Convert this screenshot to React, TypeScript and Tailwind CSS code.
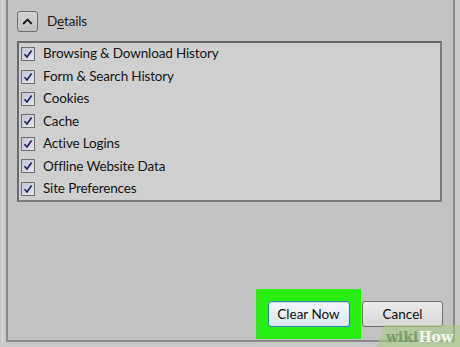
import { ChevronUp } from "lucide-react";

const ITEMS = [
  "Browsing & Download History",
  "Form & Search History",
  "Cookies",
  "Cache",
  "Active Logins",
  "Offline Website Data",
  "Site Preferences",
];

function CheckBox() {
  return (
    <div className="w-[14px] h-[14px] border border-[#6e6e6e] bg-gradient-to-br from-[#c4c4d4] to-[#e6e6ee] flex items-center justify-center shrink-0">
      <svg width="10" height="10" viewBox="0 0 10 10">
        <path d="M1.5 5.2 L4 8 L8.6 1.5" fill="none" stroke="#1d1d66" strokeWidth="1.6" />
      </svg>
    </div>
  );
}

export default function App() {
  return (
    <div
      className="w-[460px] h-[347px] bg-[#c9c9c9] relative overflow-hidden"
      style={{ fontFamily: "Lato, 'Open Sans', sans-serif" }}
    >
      <div className="absolute left-[2px] top-0 w-px h-[343px] bg-[#dedede]" />
      {/* dialog body */}
      <div className="ml-[6px] w-[449px] h-[342px] bg-[#c3c3c3] border-l-2 border-r-2 border-b-2 border-[#8a8a8a] flex flex-col pl-[9px] pr-[10px] pt-[11px] pb-[1px]">
        <div className="flex items-center h-[21px]">
          <div className="w-[21px] h-[21px] rounded-[3px] border border-[#6f6f6f] bg-gradient-to-b from-[#d4d4d4] to-[#c0c0c0] flex items-center justify-center">
            <ChevronUp className="w-[15px] h-[15px] text-[#111]" strokeWidth={3.2} />
          </div>
          <span className="ml-[9px] text-[13.5px] tracking-[-0.15px] text-[#1a1a1a]">
            D<span className="underline underline-offset-2">e</span>tails
          </span>
        </div>

        <div className="mt-[9px] w-[425px] h-[161px] bg-[#cfcfcf] border-2 border-t-[#6a6a6a] border-l-[#6a6a6a] border-b-[#7a7a7a] border-r-[#7a7a7a] flex flex-col">
          {ITEMS.map((item) => (
            <div key={item} className="h-[22.43px] flex items-center pl-[2px] gap-[8px]">
              <CheckBox />
              <span className="text-[13.5px] tracking-[-0.15px] text-[#151515] leading-none">{item}</span>
            </div>
          ))}
        </div>

        <div className="mt-auto flex items-center justify-end">
          <div className="w-[105px] h-[50px] bg-[#2aee12] flex items-center justify-center">
            <button className="w-[82px] h-[26px] rounded-[3px] border border-[#3c7fb1] bg-gradient-to-b from-[#f2f7fb] to-[#dbe6ef] text-[13.5px] text-[#111] shadow-[inset_0_0_0_1px_#c9e4f6]">
              Clear Now
            </button>
          </div>
          <button className="ml-px w-[81px] h-[26px] rounded-[3px] border border-[#707070] bg-gradient-to-b from-[#ececec] to-[#d6d6d6] text-[13.5px] text-[#111]">
            Cancel
          </button>
        </div>
      </div>

      {/* watermark */}
      <div
        className="absolute left-[380px] top-[325px] w-[90px] h-[24px] bg-[#a8cc8a]/60 pl-[6px] flex items-center"
        style={{ transform: "skewX(-20deg)" }}
      >
        <span
          className="text-[14px] font-bold leading-none whitespace-nowrap"
          style={{ transform: "skewX(20deg)", fontFamily: "'DejaVu Serif', serif" }}
        >
          <span className="text-[#7a9a6a]">wiki</span>
          <span className="text-[#f4f8f0]">How</span>
        </span>
      </div>
    </div>
  );
}
